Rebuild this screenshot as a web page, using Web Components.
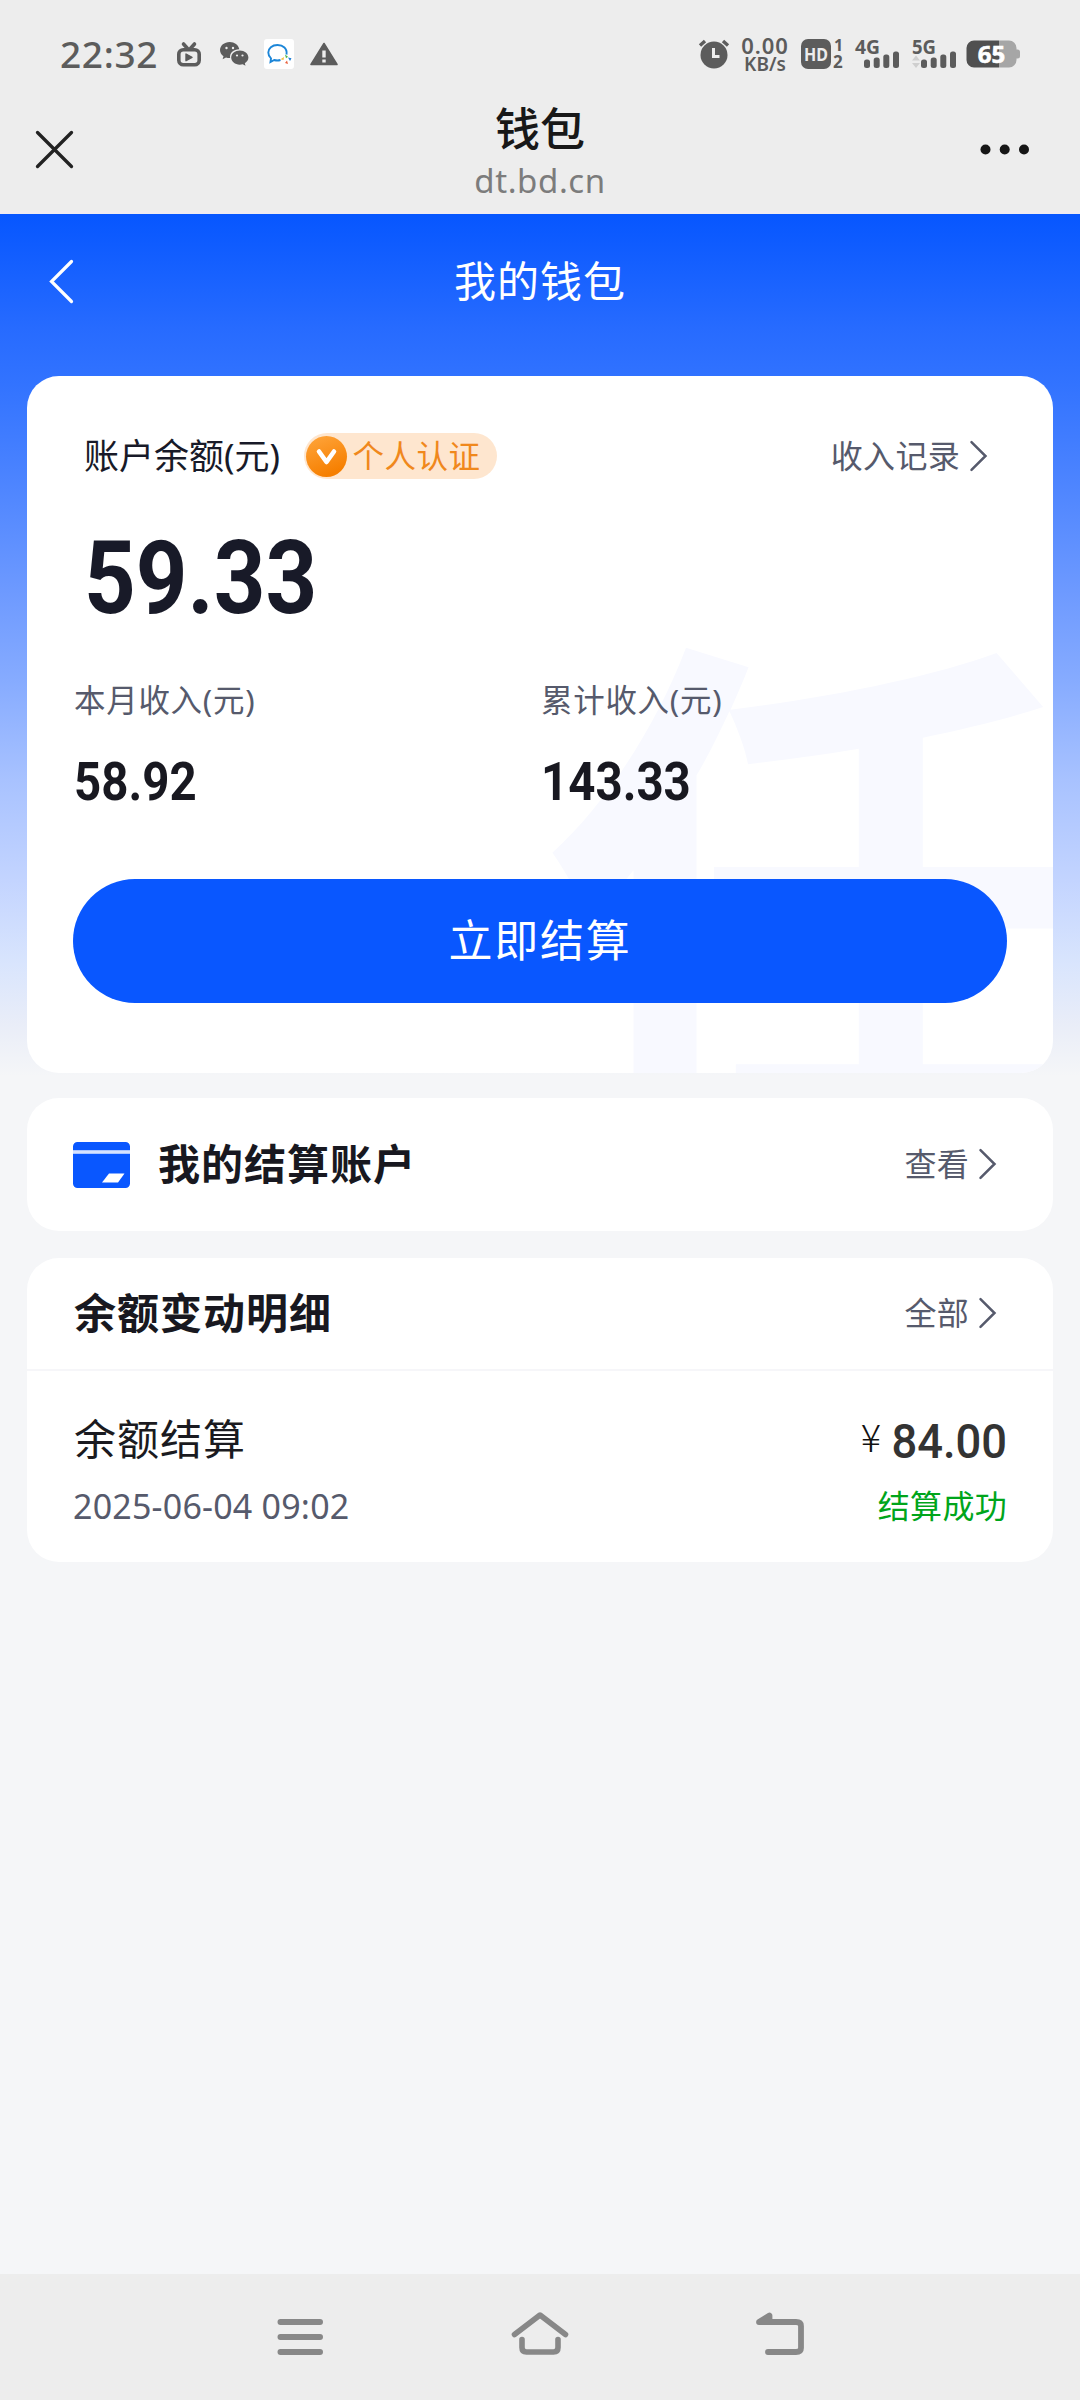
<!DOCTYPE html>
<html lang="zh-CN">
<head>
<meta charset="utf-8">
<title>钱包</title>
<style>
html,body{margin:0;padding:0}
body{width:1080px;height:2400px;background:#f5f6f8;font-family:"Noto Sans","Noto Sans CJK SC",sans-serif;overflow:hidden}
</style>
</head>
<body>
<wallet-app></wallet-app>
<script>
const define = (name, css, html) => customElements.define(name, class extends HTMLElement {
  constructor() {
    super();
    const t = document.createElement('template');
    t.innerHTML = `<style>*{box-sizing:border-box}svg{display:block;flex:none;overflow:visible}${css}</style>${html}`;
    this.attachShadow({mode: 'open'}).append(t.content.cloneNode(true));
  }
});

const bars = `<g fill="#5c5c5c"><rect x="9" y="20.500" width="6" height="8.500" rx="2.500"/><rect x="18.700" y="18.500" width="6" height="10.500" rx="2.500"/><rect x="28.300" y="15.500" width="6" height="13.500" rx="2.500"/><rect x="38" y="12.500" width="6" height="16.500" rx="2.500"/></g>`;

define('status-bar', `
:host{display:flex;height:90px;background:#ededed;color:#5c5c5c}
.l,.r{display:flex;align-items:center;height:108px}
.l{padding-left:60px}
.r{margin-left:auto;padding-right:60px}
.time{font-size:37px;font-weight:500;line-height:54px;width:117px;white-space:nowrap;letter-spacing:.7px;margin-top:-1px}
.speed{width:50px;margin-left:11px;text-align:center;font-weight:600;display:flex;flex-direction:column;align-items:center}
.speed span{display:block;white-space:nowrap}
.a{font-size:22px;line-height:19px;letter-spacing:.9px}
.b{font-size:19px;line-height:18px}
text{font-family:"Noto Sans",sans-serif;font-weight:700;fill:#5c5c5c}
`, `
<div class="l"><span class="time">22:32</span>
<svg width="24" height="25" viewBox="0 0 24 25" fill="none" stroke="#5c5c5c" stroke-width="3.6" stroke-linecap="round"><rect x="1.8" y="7.8" width="20.4" height="15" rx="4.5"/><path d="M6.5 2l4 4.5M17.5 2l-4 4.5"/><path d="M9 12l6 3.3L9 18.7z" fill="#5c5c5c" stroke-width="1.4" stroke-linejoin="round"/></svg>
<svg style="margin-left:19px" width="29" height="24" viewBox="0 0 29 24"><path fill="#5c5c5c" d="M9.7 0C4.3 0 0 3.6 0 8.1c0 2.5 1.3 4.7 3.5 6.2l-.9 3 3.4-1.8c1.2.4 2.4.6 3.7.6h.4C9.3 11 13.700 7.200 19.300 7.300C18.500 3 14.500 0 9.700 0z"/><path fill="#5c5c5c" d="M19.800 8.500c-4.700 0-8.600 3.100-8.600 7.100s3.800 7.100 8.600 7.100c1 0 2-.2 2.900-.4l2.800 1.500-.7-2.500c2.200-1.300 3.600-3.300 3.600-5.700 0-4-3.900-7.100-8.600-7.100z"/><g fill="#ededed"><circle cx="6.500" cy="6" r="1.200"/><circle cx="13" cy="6" r="1.200"/><circle cx="17" cy="13.500" r="1.100"/><circle cx="22.500" cy="13.500" r="1.100"/></g></svg>
<svg style="margin-left:15px" width="30" height="30" viewBox="0 0 30 30"><rect width="30" height="30" rx="3" fill="#fff"/><path d="M22.500 15.500C23.500 9.500 19 6 13.500 6C8 6 4.300 9.300 4.300 13.500c0 2.500 1.100 4.500 2.700 5.900L6.500 23l3.700-2c2 .6 4.300.6 6.300 0" fill="none" stroke="#1c86d8" stroke-width="1.900"/><path d="M21 15.500l3 2.200-2 1.500z" fill="#4fb848"/><path d="M24 18.500l3.500.8-1.500 2.700z" fill="#1c7fd8"/><path d="M23 21.500l1 3.500-3-1z" fill="#e8603c"/><path d="M20 18l-.5 3-3-.8z" fill="#f3bd3a"/></svg>
<svg style="margin-left:16px" width="28" height="24" viewBox="0 0 28 24"><path d="M14 1.500L27 22.500H1z" fill="#5c5c5c" stroke="#5c5c5c" stroke-width="1.600" stroke-linejoin="round"/><path d="M12.300 8.500h3.400v7h-3.400zM12.300 17.500h3.400v3h-3.400z" fill="#ededed"/></svg>
</div>
<div class="r">
<svg width="30" height="30" viewBox="0 0 30 30"><circle cx="15" cy="16" r="13.500" fill="#5c5c5c"/><path d="M1 6.500L6 2M29 6.500L24 2" stroke="#5c5c5c" stroke-width="3.400"/><path d="M14.500 9v8.500h6" stroke="#ededed" stroke-width="3" fill="none"/></svg>
<div class="speed"><span class="a">0.00</span><span class="b">KB/s</span></div>
<svg style="margin-left:11px" width="42" height="30" viewBox="0 0 42 30"><rect width="30" height="30" rx="7" fill="#5c5c5c"/><text x="15" y="21.500" text-anchor="middle" font-size="18.500" textLength="24" lengthAdjust="spacingAndGlyphs" style="fill:#ededed">HD</text><text x="33" y="12" font-size="16">1</text><text x="32" y="29" font-size="17">2</text></svg>
<svg style="margin-left:12px" width="44" height="30" viewBox="0 0 44 30"><text x="0" y="14.500" font-size="20" textLength="25" lengthAdjust="spacingAndGlyphs">4G</text>${bars}</svg>
<svg style="margin-left:13px" width="44" height="30" viewBox="0 0 44 30"><text x="0" y="14.500" font-size="20" textLength="24" lengthAdjust="spacingAndGlyphs">5G</text><path d="M0 21.500l4-5 4 5zM0 24l4 5 4-5z" fill="#cfcfcf"/>${bars}</svg>
<svg style="margin-left:10px" width="54" height="28" viewBox="0 0 54 28"><path d="M8 0.500H33V27.500H8a7.500 7.500 0 0 1-7.500-7.500V8A7.500 7.500 0 0 1 8 .5z" fill="#505050"/><path d="M33 .5h10A7.500 7.500 0 0 1 50.500 8v1.500h1a2.500 2.500 0 0 1 2.500 2.500v4a2.500 2.500 0 0 1-2.500 2.500h-1V20a7.500 7.500 0 0 1-7.500 7.500H33z" fill="#a6a6a6"/><text x="25.500" y="22.500" text-anchor="middle" font-size="24" style="fill:#fff;stroke:#fff;stroke-width:.6px">65</text></svg>
</div>`);

define('browser-bar', `
:host{display:grid;grid-template-columns:110px 1fr 110px;align-items:center;height:124px;background:#ededed;border-bottom:3px solid #efebf1;text-align:center}
.x{margin-left:36px}
.d{margin-left:auto;margin-right:50px}
.x,.d{align-self:start;margin-top:41px}
.c{display:flex;flex-direction:column;height:121px;white-space:nowrap}
b{font-size:45px;font-weight:500;line-height:60px;color:#181818;margin-top:9px}
span{font-size:33px;line-height:40px;color:#7c7c7c;letter-spacing:.6px;margin-top:2px}
`, `
<svg class="x" width="37" height="37" viewBox="0 0 37 37"><path d="M1.500 1.500l34 34M35.500 1.500l-34 34" stroke="#222" stroke-width="3.300" stroke-linecap="round"/></svg>
<div class="c"><b><slot></slot></b><span><slot name="host"></slot></span></div>
<svg class="d" width="50" height="37" viewBox="0 0 50 37" fill="#161616"><circle cx="5.500" cy="18.500" r="5"/><circle cx="24.700" cy="18.500" r="5"/><circle cx="44" cy="18.500" r="5"/></svg>`);

define('page-head', `
:host{display:grid;grid-template-columns:120px 1fr 120px;align-items:center;height:162px;padding-bottom:28px;color:#fff}
svg{margin-left:49px}
span{text-align:center;font-size:42px;letter-spacing:1px;line-height:60px}
`, `<svg width="24" height="43" viewBox="0 0 24 43"><path d="M22.500 1.500L2.500 21.500l20 20" fill="none" stroke="#fff" stroke-width="3.200" stroke-linecap="round"/></svg><span><slot></slot></span>`);

define('more-link', `
:host{display:flex;align-items:center;gap:10px;font-size:32px;line-height:44px;letter-spacing:.3px;color:#565a6c;white-space:nowrap}
`, `<span><slot></slot></span><svg width="17" height="30" viewBox="0 0 17 30"><path d="M1.500 1.200L15.500 15 1.500 28.800" fill="none" stroke="#565a6c" stroke-width="2.500" stroke-linecap="round"/></svg>`);

define('verify-badge', `
:host{display:flex;align-items:center;height:46px;width:193px;padding-left:1.500px;gap:6px;border-radius:23px;background:#fee6cf;color:#f0881c;font-size:31.500px;line-height:44px;letter-spacing:.5px;white-space:nowrap}
`, `<svg width="41" height="41" viewBox="0 0 41 41"><defs><linearGradient id="g" x1="0" y1="0" x2=".4" y2="1"><stop offset="0" stop-color="#ffa63d"/><stop offset="1" stop-color="#f67f00"/></linearGradient></defs><circle cx="20.500" cy="20.500" r="20.500" fill="url(#g)"/><path d="M13 15.500l7.500 10.500L28 15.500" fill="none" stroke="#fff" stroke-width="4.600" stroke-linecap="round" stroke-linejoin="round"/></svg><span><slot></slot></span>`);

define('din-number', `
:host{display:block;font-family:Roboto,"Noto Sans",sans-serif;font-weight:700;color:#181a28;white-space:nowrap;line-height:1}
span{display:inline-block;transform:scaleX(var(--sx,.9));transform-origin:var(--o,0) 50%}
`, `<span><slot></slot></span>`);

define('stat-item', `
:host{display:flex;flex-direction:column;width:467px}
label{font-size:31.500px;line-height:44px;letter-spacing:.7px;color:#565a6c;white-space:nowrap}
din-number{font-size:53px;--sx:.895;margin-top:34px;color:#181820}
`, `<label><slot name="label"></slot></label><din-number><slot></slot></din-number>`);

define('balance-card', `
:host{display:block;position:relative;height:697px;border-radius:32px;background:#fff;overflow:hidden;isolation:isolate}
.mark{position:absolute;z-index:-1;left:518px;top:224px;font:700 530px/530px "Noto Sans CJK SC",sans-serif;color:#f8f9ff}
.top{display:flex;align-items:center;padding:57px 66px 0 57px;height:103px}
.t{font-size:35px;line-height:46px;color:#181a28;white-space:nowrap;width:220px}
more-link{margin-left:auto}
.big{font-size:102px;--sx:.885;margin:48px 0 0 57px}
.stats{display:flex;padding:49px 0 0 47px}
button{display:block;width:934px;height:124px;margin:70px 0 0 46px;border:0;border-radius:62px;background:#0957ff;color:#fff;font:400 44px/60px "Noto Sans","Noto Sans CJK SC",sans-serif;letter-spacing:1.800px;padding:0 0 2px}
`, `
<div class="mark" aria-hidden="true">任</div>
<div class="top"><span class="t">账户余额(元)</span><verify-badge>个人认证</verify-badge><more-link>收入记录</more-link></div>
<din-number class="big">59.33</din-number>
<div class="stats"><stat-item><span slot="label">本月收入(元)</span>58.92</stat-item><stat-item><span slot="label">累计收入(元)</span>143.33</stat-item></div>
<button>立即结算</button>`);

define('account-card', `
:host{display:flex;align-items:center;height:133px;border-radius:32px;background:#fff;padding:0 57px 0 46px}
b{font-size:42px;font-weight:600;line-height:60px;letter-spacing:1px;color:#181820;margin-left:28px;margin-top:-2px}
more-link{margin-left:auto;margin-top:-1px}
`, `<svg width="57" height="46" viewBox="0 0 57 46"><path d="M4.500 0h48A4.500 4.500 0 0 1 57 4.500V8.500H0V4.500A4.500 4.500 0 0 1 4.500 0zM0 11.500h57V41.500A4.500 4.500 0 0 1 52.500 46h-48A4.500 4.500 0 0 1 0 41.500z" fill="#0957ff"/><path d="M0 8.500h57v3H0z" fill="#d5e2ff"/><path d="M36 31.500h15.500L45 40.500H29z" fill="#fff"/></svg><b><slot></slot></b><more-link>查看</more-link>`);

define('history-card', `
:host{display:block;height:304px;border-radius:32px;background:#fff}
.h{display:flex;align-items:center;height:113px;padding:0 57px 2px 47px;border-bottom:2px solid #f6f6f9}
b{font-size:42px;font-weight:600;line-height:60px;letter-spacing:1px;color:#181820}
more-link{margin-left:auto}
`, `<div class="h"><b>余额变动明细</b><more-link>全部</more-link></div><slot></slot>`);

define('history-row', `
:host{display:block;padding:38px 46px 0 47px}
div{display:flex;justify-content:space-between;white-space:nowrap}
.n{font-size:42px;line-height:60px;letter-spacing:1px;color:#1a1a20}
.m{display:flex;align-items:center}
.y{font-family:"Noto Sans CJK SC",sans-serif;font-weight:300;font-size:38px;line-height:60px;color:#111;margin:-6px 8px 0 0}
din-number{font-size:49px;font-weight:500;color:#333;--sx:.925;--o:100%;margin:4px 0 0 -7px}
.s{font-size:32px;line-height:46px;height:46px;margin-top:14px}
.d{font-size:34px;color:#565a6c;letter-spacing:.2px;margin-left:-1px}
.ok{color:#00a51b;letter-spacing:.3px}
`, `<div><span class="n"><slot></slot></span><span class="m"><span class="y">¥</span><din-number><slot name="amount"></slot></din-number></span></div>
<div class="s"><span class="d"><slot name="date"></slot></span><span class="ok"><slot name="state"></slot></span></div>`);

define('nav-bar', `
:host{display:flex;justify-content:center;height:126px;background:#ededed;padding-top:38px;gap:180px}
`, `
<svg width="60" height="44" viewBox="270 2312 60 44" fill="none" stroke="#888" stroke-width="6" stroke-linecap="round"><path d="M280.500 2322h39.500M280.500 2337h39.500M280.500 2352h39.500"/></svg>
<svg width="60" height="44" viewBox="510 2312 60 44" fill="none" stroke="#888" stroke-width="5.600" stroke-linecap="round" stroke-linejoin="round"><path d="M514.500 2334.500L540 2315l25.500 19.500M522 2339.500v8q0 4.500 4.500 4.500h27q4.500 0 4.500-4.500v-8"/></svg>
<svg width="60" height="44" viewBox="750 2312 60 44" fill="none" stroke="#888" stroke-width="5.800" stroke-linecap="round" stroke-linejoin="round"><path d="M768 2352h28q5 0 5-4v-22q0-4-5-4H759L769.500 2315.500V2320"/></svg>`);

define('wallet-app', `
:host{display:flex;flex-direction:column;width:1080px;height:2400px;background:#f5f6f8}
main{flex:1;display:flex;flex-direction:column;background:linear-gradient(180deg,#0756ff 0,#0c5aff 20px,#276bff 115px,#3273ff 170px,#4680ff 245px,#6e9aff 380px,#86abff 466px,#a8c2ff 566px,#c3d4ff 666px,#d9e5fd 750px,#e9edf8 810px,#f5f6f8 862px)}
section{display:flex;flex-direction:column;padding:0 27px}
account-card{margin-top:25px}
history-card{margin-top:27px}
`, `
<status-bar></status-bar>
<browser-bar>钱包<span slot="host">dt.bd.cn</span></browser-bar>
<main><page-head>我的钱包</page-head>
<section><balance-card></balance-card>
<account-card>我的结算账户</account-card>
<history-card><history-row>余额结算<span slot="amount">84.00</span><span slot="date">2025-06-04 09:02</span><span slot="state">结算成功</span></history-row></history-card></section></main>
<nav-bar></nav-bar>`);
</script>
</body>
</html>
